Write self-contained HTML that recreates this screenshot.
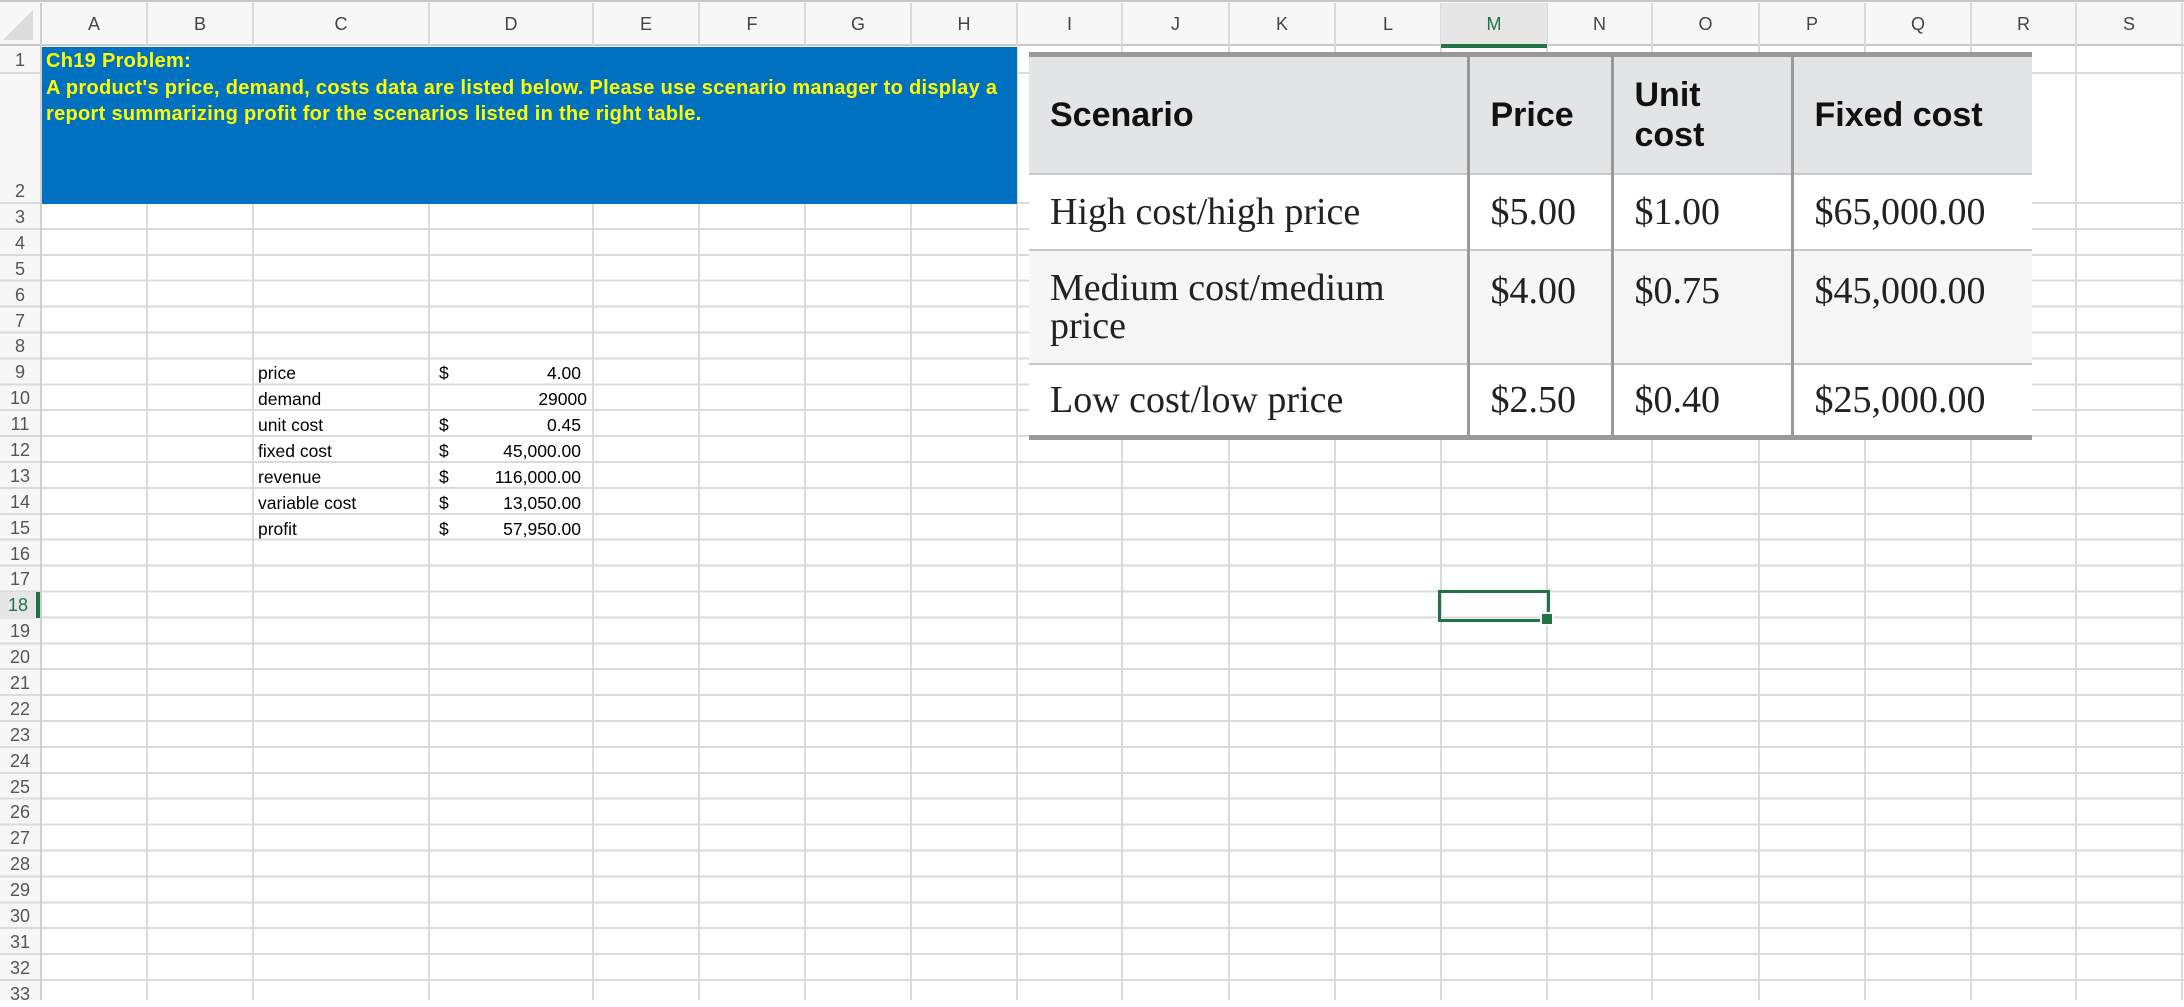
<!DOCTYPE html>
<html><head><meta charset="utf-8"><style>
*{margin:0;padding:0;box-sizing:border-box}
body{width:2184px;height:1000px;overflow:hidden;background:#fff;position:relative;font-family:"Liberation Sans",sans-serif}
.abs{position:absolute}
.vl{position:absolute;top:3px;height:997px;width:2px;background:#dadada}
.grid{position:absolute;left:0;top:202px;width:2184px;height:798px;background:repeating-linear-gradient(to bottom,#dadada 0,#dadada 2px,transparent 2px,transparent 25.9px)}
.ch{position:absolute;top:3px;height:43px;line-height:43px;text-align:center;font-size:18px;color:#444}
.rn{position:absolute;left:0;width:40px;text-align:center;font-size:18px;color:#555;height:25.9px;line-height:26px}
.d{position:absolute;font-size:17.5px;color:#000;height:26px;line-height:28px}
table{position:absolute;left:1029px;top:52px;width:1003px;border-collapse:collapse;border-top:5px solid #999;border-bottom:5px solid #999}
td{border-left:3px solid #999;padding:0 0 0 21px;font-family:"Liberation Serif",serif;font-size:38px;color:#222;vertical-align:middle}
td:first-child{border-left:none}
tr.h td{background:#e3e4e5;font-family:"Liberation Sans",sans-serif;font-weight:bold;font-size:34px;color:#111;height:119px;line-height:40px}
tr.r td{border-top:2px solid #c8c8c8}
</style></head><body>
<div class="abs" style="left:0;top:0;width:2184px;height:46px;background:#f7f7f7;border-top:2px solid #c8c8c8;border-bottom:2px solid #c8c8c8"></div>
<div class="abs" style="left:3px;top:10px;width:0;height:0;border-left:30px solid transparent;border-bottom:30px solid #dcdcdc"></div>
<div class="abs" style="left:0;top:46px;width:41px;height:954px;background:#f7f7f7"></div>
<div class="grid"></div>
<div class="abs" style="left:0;top:72px;width:2184px;height:2px;background:#dadada"></div>
<div class="vl" style="left:40px;background:#cfcfcf"></div>
<div class="vl" style="left:146px"></div><div class="vl" style="left:252px"></div><div class="vl" style="left:428px"></div><div class="vl" style="left:592px"></div><div class="vl" style="left:698px"></div><div class="vl" style="left:804px"></div><div class="vl" style="left:910px"></div><div class="vl" style="left:1016px"></div><div class="vl" style="left:1121px"></div><div class="vl" style="left:1228px"></div><div class="vl" style="left:1334px"></div><div class="vl" style="left:1440px"></div><div class="vl" style="left:1546px"></div><div class="vl" style="left:1651px"></div><div class="vl" style="left:1758px"></div><div class="vl" style="left:1864px"></div><div class="vl" style="left:1970px"></div><div class="vl" style="left:2075px"></div><div class="vl" style="left:2181px"></div>
<div class="ch" style="left:41px;width:106px">A</div><div class="ch" style="left:147px;width:106px">B</div><div class="ch" style="left:253px;width:176px">C</div><div class="ch" style="left:429px;width:164px">D</div><div class="ch" style="left:593px;width:106px">E</div><div class="ch" style="left:699px;width:106px">F</div><div class="ch" style="left:805px;width:106px">G</div><div class="ch" style="left:911px;width:106px">H</div><div class="ch" style="left:1017px;width:105px">I</div><div class="ch" style="left:1122px;width:107px">J</div><div class="ch" style="left:1229px;width:106px">K</div><div class="ch" style="left:1335px;width:106px">L</div><div class="ch" style="left:1441px;width:106px;color:#217346;background:#e6e6e6;border-bottom:4px solid #217346;height:45px">M</div><div class="ch" style="left:1547px;width:105px">N</div><div class="ch" style="left:1652px;width:107px">O</div><div class="ch" style="left:1759px;width:106px">P</div><div class="ch" style="left:1865px;width:106px">Q</div><div class="ch" style="left:1971px;width:105px">R</div><div class="ch" style="left:2076px;width:106px">S</div>
<div class="rn" style="top:47px">1</div>
<div class="rn" style="top:178px">2</div>
<div class="abs" style="left:0;top:204px;width:40px">
<div class="rn" style="position:relative">3</div><div class="rn" style="position:relative">4</div><div class="rn" style="position:relative">5</div><div class="rn" style="position:relative">6</div><div class="rn" style="position:relative">7</div><div class="rn" style="position:relative">8</div><div class="rn" style="position:relative">9</div><div class="rn" style="position:relative">10</div><div class="rn" style="position:relative">11</div><div class="rn" style="position:relative">12</div><div class="rn" style="position:relative">13</div><div class="rn" style="position:relative">14</div><div class="rn" style="position:relative">15</div><div class="rn" style="position:relative">16</div><div class="rn" style="position:relative">17</div><div class="rn" style="position:relative;color:#217346;background:#e6e6e6;border-right:4px solid #217346">18</div><div class="rn" style="position:relative">19</div><div class="rn" style="position:relative">20</div><div class="rn" style="position:relative">21</div><div class="rn" style="position:relative">22</div><div class="rn" style="position:relative">23</div><div class="rn" style="position:relative">24</div><div class="rn" style="position:relative">25</div><div class="rn" style="position:relative">26</div><div class="rn" style="position:relative">27</div><div class="rn" style="position:relative">28</div><div class="rn" style="position:relative">29</div><div class="rn" style="position:relative">30</div><div class="rn" style="position:relative">31</div><div class="rn" style="position:relative">32</div><div class="rn" style="position:relative">33</div>
</div>
<div class="abs" style="left:42px;top:47px;width:975px;height:157px;background:#0070c0;color:#ffff00;font-weight:bold;font-size:20px;letter-spacing:0.3px;line-height:26.5px;padding:1px 0 0 4px;white-space:nowrap">Ch19 Problem:<br>A product's price, demand, costs data are listed below. Please use scenario manager to display a<br>report summarizing profit for the scenarios listed in the right table.</div>
<div class="d" style="left:258px;top:359px">price</div><div class="d" style="left:439px;top:359px">$</div><div class="d" style="left:430px;top:359px;width:151px;text-align:right">4.00</div>
<div class="d" style="left:258px;top:385px">demand</div><div class="d" style="left:430px;top:385px;width:157px;text-align:right">29000</div>
<div class="d" style="left:258px;top:411px">unit cost</div><div class="d" style="left:439px;top:411px">$</div><div class="d" style="left:430px;top:411px;width:151px;text-align:right">0.45</div>
<div class="d" style="left:258px;top:437px">fixed cost</div><div class="d" style="left:439px;top:437px">$</div><div class="d" style="left:430px;top:437px;width:151px;text-align:right">45,000.00</div>
<div class="d" style="left:258px;top:463px">revenue</div><div class="d" style="left:439px;top:463px">$</div><div class="d" style="left:430px;top:463px;width:151px;text-align:right">116,000.00</div>
<div class="d" style="left:258px;top:489px">variable cost</div><div class="d" style="left:439px;top:489px">$</div><div class="d" style="left:430px;top:489px;width:151px;text-align:right">13,050.00</div>
<div class="d" style="left:258px;top:515px">profit</div><div class="d" style="left:439px;top:515px">$</div><div class="d" style="left:430px;top:515px;width:151px;text-align:right">57,950.00</div>
<div class="abs" style="left:1438px;top:590px;width:112px;height:32px;border:3px solid #217346"></div>
<div class="abs" style="left:1542px;top:614px;width:10px;height:10px;background:#217346;outline:2px solid #fff"></div>
<table>
<tr class="h"><td style="width:439px">Scenario</td><td style="width:144px">Price</td><td style="width:180px">Unit<br>cost</td><td>Fixed cost</td></tr>
<tr class="r"><td style="height:76px;background:#fff">High cost/high price</td><td style="background:#fff">$5.00</td><td style="background:#fff">$1.00</td><td style="background:#fff">$65,000.00</td></tr>
<tr class="r"><td style="height:114px;background:#f6f6f6;line-height:38px">Medium cost/medium<br>price</td><td style="background:#f6f6f6;vertical-align:top;padding-top:18px">$4.00</td><td style="background:#f6f6f6;vertical-align:top;padding-top:18px">$0.75</td><td style="background:#f6f6f6;vertical-align:top;padding-top:18px">$45,000.00</td></tr>
<tr class="r"><td style="height:74px;background:#fff">Low cost/low price</td><td style="background:#fff">$2.50</td><td style="background:#fff">$0.40</td><td style="background:#fff">$25,000.00</td></tr>
</table>
</body></html>
